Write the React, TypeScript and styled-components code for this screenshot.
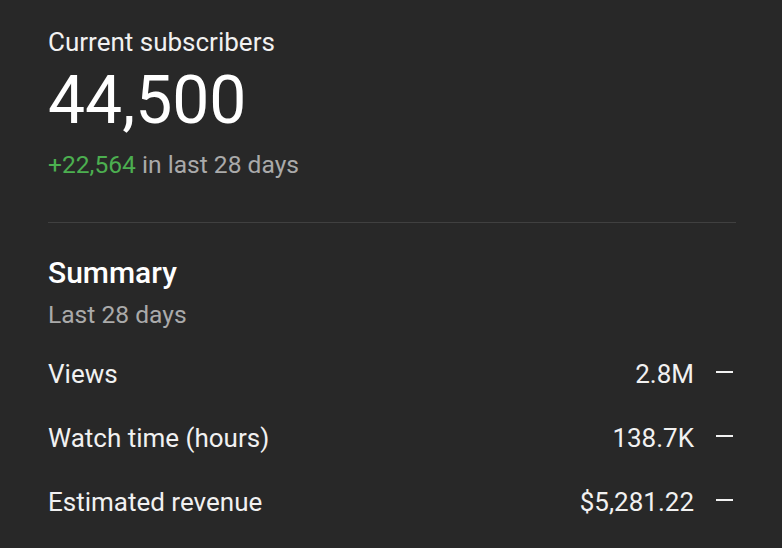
import React from 'react';
import styled, { createGlobalStyle } from 'styled-components';

const GlobalStyle = createGlobalStyle`
  html, body {
    margin: 0;
    padding: 0;
    background: #282828;
  }
  body {
    font-family: Roboto, "Noto Sans", Arial, sans-serif;
    color: #f1f1f1;
  }
`;

const Page = styled.div`
  min-height: 548px;
  padding: 26px 46px 0 48px;
  box-sizing: border-box;
`;

const Label = styled.div`
  font-size: 26px;
  line-height: 32px;
  color: #f1f1f1;
`;

const BigNumber = styled.div`
  margin-top: 7px;
  font-size: 66px;
  line-height: 72px;
  color: #ffffff;
`;

const Change = styled.div`
  margin-top: 14px;
  font-size: 24.6px;
  line-height: 28px;
  color: #aaaaaa;

  .up {
    color: #4caf50;
  }
`;

const Divider = styled.hr`
  margin: 43px 0 0;
  border: 0;
  height: 1px;
  background: #404040;
`;

const Heading = styled.div`
  margin-top: 32px;
  font-size: 30px;
  line-height: 36px;
  font-weight: 500;
  color: #ffffff;
`;

const SubHeading = styled.div`
  margin-top: 10px;
  font-size: 24.6px;
  line-height: 28px;
  color: #aaaaaa;
`;

const Rows = styled.div`
  margin-top: 13px;
  display: flex;
  flex-direction: column;
`;

const Row = styled.div`
  height: 64px;
  display: flex;
  align-items: center;
  font-size: 26px;
  line-height: 32px;
`;

const RowLabel = styled.span`
  flex: 1;
`;

const RowValue = styled.span`
  text-align: right;
`;

const Trend = styled.span`
  width: 24px;
  height: 24px;
  margin-left: 18px;
  margin-bottom: 4px;
  display: flex;
  align-items: center;
  justify-content: center;
`;

const FlatIcon = () => (
  <svg width="17" height="2" viewBox="0 0 17 2">
    <rect width="17" height="2" fill="#f1f1f1" />
  </svg>
);

const metrics = [
  { label: 'Views', value: '2.8M' },
  { label: 'Watch time (hours)', value: '138.7K' },
  { label: 'Estimated revenue', value: '$5,281.22' },
];

export default function App() {
  return (
    <>
      <GlobalStyle />
      <Page>
        <Label>Current subscribers</Label>
        <BigNumber>44,500</BigNumber>
        <Change>
          <span className="up">+22,564</span> in last 28 days
        </Change>
        <Divider />
        <Heading>Summary</Heading>
        <SubHeading>Last 28 days</SubHeading>
        <Rows>
          {metrics.map((m) => (
            <Row key={m.label}>
              <RowLabel>{m.label}</RowLabel>
              <RowValue>{m.value}</RowValue>
              <Trend>
                <FlatIcon />
              </Trend>
            </Row>
          ))}
        </Rows>
      </Page>
    </>
  );
}
